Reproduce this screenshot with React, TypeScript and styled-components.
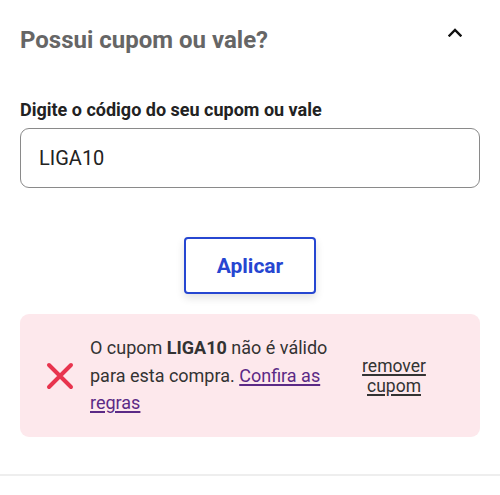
import React, { useState } from 'react';
import styled, { createGlobalStyle } from 'styled-components';

const GlobalStyle = createGlobalStyle`
  html, body {
    margin: 0;
    padding: 0;
    background: #ffffff;
    font-family: Roboto, 'Noto Sans', Arial, sans-serif;
  }
  * {
    box-sizing: border-box;
  }
`;

const Section = styled.section`
  width: 500px;
  border-bottom: 2px solid #eeeeee;
  padding: 0 20px 37px;
`;

const Header = styled.header`
  display: flex;
  justify-content: space-between;
  align-items: center;
  padding: 24px 0 0;
  height: 56px;
`;

const Title = styled.h2`
  margin: 0;
  font-size: 24px;
  font-weight: 700;
  color: #666666;
`;

const ToggleButton = styled.button`
  border: none;
  background: none;
  padding: 0;
  margin-right: 18px;
  display: flex;
  align-items: center;
  cursor: pointer;
  align-self: flex-start;
  margin-top: 4px;
`;

const Field = styled.div`
  margin-top: 43px;
  display: flex;
  flex-direction: column;
  gap: 7px;
`;

const Label = styled.label`
  font-size: 18px;
  line-height: 22px;
  font-weight: 700;
  color: #222222;
`;

const Input = styled.input`
  width: 100%;
  height: 60px;
  border: 1px solid #8a8a8a;
  border-radius: 9px;
  padding: 0 18px;
  font-family: inherit;
  font-size: 20px;
  color: #222222;
  outline: none;
`;

const Actions = styled.div`
  display: flex;
  justify-content: center;
  margin-top: 49px;
`;

const ApplyButton = styled.button`
  width: 132px;
  height: 57px;
  border: 2px solid #2646d1;
  border-radius: 4px;
  background: #ffffff;
  color: #2646d1;
  font-family: inherit;
  font-size: 21px;
  font-weight: 700;
  box-shadow: 0 4px 8px rgba(0, 0, 0, 0.12);
  cursor: pointer;
`;

const ErrorBox = styled.div`
  margin-top: 20px;
  background: #fde8ec;
  border-radius: 9px;
  min-height: 123px;
  display: flex;
  align-items: center;
  padding: 0 0 0 26px;
`;

const ErrorIcon = styled.span`
  flex: none;
  display: flex;
  width: 28px;
  margin-right: 16px;
`;

const Message = styled.p`
  margin: 0;
  width: 252px;
  font-size: 18px;
  line-height: 27.5px;
  color: #333333;

  strong {
    font-weight: 700;
  }
`;

const RulesLink = styled.a`
  color: #5b2a86;
  text-decoration: underline;
  text-decoration-thickness: 2px;
  text-underline-offset: 2px;
`;

const RemoveLink = styled.a`
  margin-left: 20px;
  width: 64px;
  text-align: center;
  font-size: 17.5px;
  line-height: 20px;
  color: #333333;
  text-decoration: underline;
  text-decoration-thickness: 2px;
  text-underline-offset: 2px;
  cursor: pointer;
`;

function ChevronUp() {
  return (
    <svg width="14" height="9" viewBox="0 0 14 9" fill="none">
      <path d="M1.5 7.5L7 2l5.5 5.5" stroke="#111" strokeWidth="2.4" strokeLinecap="square" />
    </svg>
  );
}

function CrossIcon() {
  return (
    <svg width="28" height="28" viewBox="0 0 28 28" fill="none">
      <path d="M3 3l22 22M25 3L3 25" stroke="#e8344e" strokeWidth="4" strokeLinecap="round" />
    </svg>
  );
}

export default function App() {
  const [code, setCode] = useState('LIGA10');

  return (
    <>
      <GlobalStyle />
      <Section>
        <Header>
          <Title>Possui cupom ou vale?</Title>
          <ToggleButton aria-label="Recolher">
            <ChevronUp />
          </ToggleButton>
        </Header>

        <Field>
          <Label htmlFor="coupon">Digite o código do seu cupom ou vale</Label>
          <Input id="coupon" value={code} onChange={(e) => setCode(e.target.value)} />
        </Field>

        <Actions>
          <ApplyButton>Aplicar</ApplyButton>
        </Actions>

        <ErrorBox>
          <ErrorIcon>
            <CrossIcon />
          </ErrorIcon>
          <Message>
            O cupom <strong>LIGA10</strong> não é válido para esta compra.{' '}
            <RulesLink href="#">Confira as regras</RulesLink>
          </Message>
          <RemoveLink>remover cupom</RemoveLink>
        </ErrorBox>
      </Section>
    </>
  );
}
